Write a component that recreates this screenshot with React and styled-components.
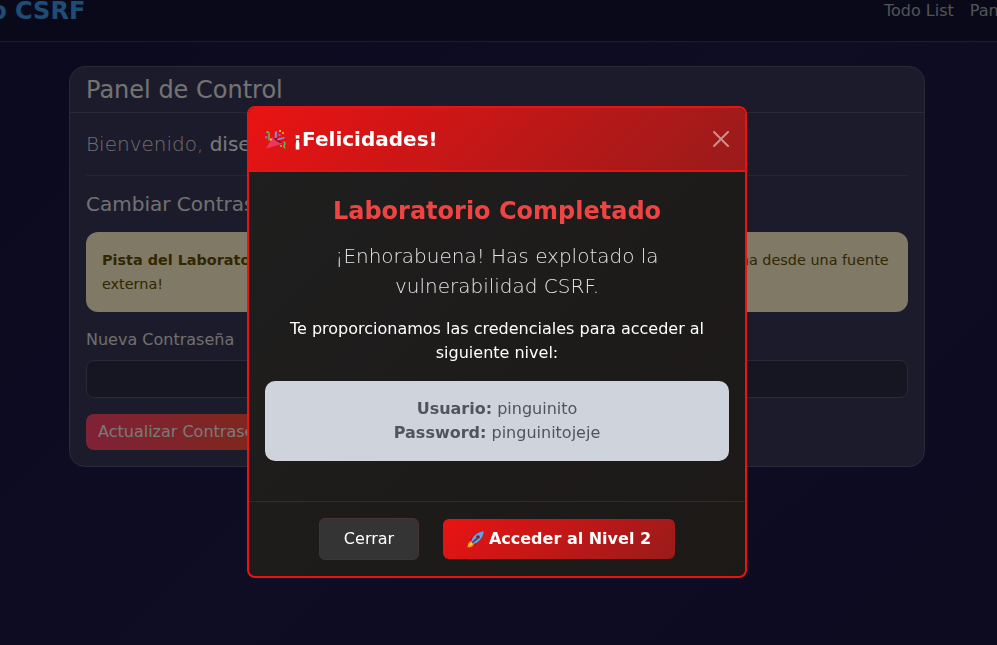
import React from 'react'
import styled, { createGlobalStyle } from 'styled-components'

const GlobalStyle = createGlobalStyle`
  html, body {
    margin: 0;
    height: 100%;
    overflow: hidden;
  }
  body {
    font-family: "DejaVu Sans", sans-serif;
    font-size: 16px;
    line-height: 1.5;
    color: #e0e0e0;
    background: linear-gradient(135deg, #16143c 0%, #1e1a48 50%, #1a1640 100%);
  }
  * {
    box-sizing: border-box;
  }
`

const Navbar = styled.nav`
  height: 42px;
  display: flex;
  justify-content: space-between;
  align-items: center;
  overflow: hidden;
  background: #141232;
  border-bottom: 1px solid #3c3a52;
`

const Brand = styled.a`
  flex: none;
  margin-left: -151px;
  margin-top: -20px;
  font-size: 24px;
  font-weight: 700;
  color: #3d9be9;
`

const NavLinks = styled.div`
  flex: none;
  display: flex;
  gap: 16px;
  margin-right: -16px;
  margin-top: -20px;
`

const NavLink = styled.a`
  color: #a6a6ad;
`

const Main = styled.main`
  padding: 24px 72px 0 69px;
`

const Card = styled.section`
  width: 856px;
  height: 401px;
  border: 1px solid #55536e;
  border-radius: 16px;
  background: #393657;
  overflow: hidden;
`

const CardHeader = styled.header`
  height: 46px;
  padding: 5px 16px 3px;
  font-size: 24px;
  line-height: 36px;
  color: #e6e6e6;
  border-bottom: 1px solid #55536e;
`

const CardBody = styled.div`
  padding: 16px;
`

const Welcome = styled.p`
  margin: 0;
  height: 47px;
  font-size: 20px;
  line-height: 30px;
  font-weight: 300;
  color: #dcdcdc;
  border-bottom: 1px solid #4a4866;

  strong {
    font-weight: 400;
    color: #f2f2f2;
  }
`

const SectionTitle = styled.h5`
  margin: 13px 0 0;
  font-size: 20px;
  font-weight: 400;
  line-height: 30px;
  color: #e0e0e0;
`

const Alert = styled.div`
  margin-top: 13px;
  height: 80px;
  padding: 16px;
  border-radius: 12px;
  font-size: 14.4px;
  line-height: 24px;
  background: #fff3cd;
  color: #664d03;
`

const FieldLabel = styled.label`
  display: block;
  margin-top: 16px;
  color: #dedede;
`

const FieldInput = styled.div`
  margin-top: 8px;
  height: 38px;
  border: 1px solid #55536e;
  border-radius: 8px;
  background: #2c2b44;
`

const SubmitButton = styled.button`
  display: block;
  margin-top: 16px;
  height: 36px;
  padding: 0 12px;
  border: 0;
  border-radius: 8px;
  font: inherit;
  color: #f2f2f2;
  background: linear-gradient(90deg, #ff4470, #ff5030);
`

const Backdrop = styled.div`
  position: fixed;
  inset: 0;
  display: flex;
  justify-content: center;
  align-items: flex-start;
  padding: 106px 3px 0 0;
  background: rgba(0, 0, 0, 0.5);
`

const Modal = styled.div`
  width: 500px;
  height: 472px;
  display: flex;
  flex-direction: column;
  border: 2px solid #ea1313;
  border-radius: 8px;
  overflow: hidden;
  background: linear-gradient(135deg, #1f1f1f, #1c1917);
`

const ModalHeader = styled.header`
  flex: none;
  height: 64px;
  display: flex;
  align-items: center;
  justify-content: space-between;
  padding: 0 16px;
  border-bottom: 2px solid #ea1313;
  background: linear-gradient(135deg, #ea1313, #991b1b);
`

const ModalTitle = styled.h5`
  margin: 0;
  display: flex;
  align-items: center;
  gap: 6px;
  font-size: 20px;
  font-weight: 700;
  line-height: 30px;
  color: #fff;
`

const CloseButton = styled.button`
  display: flex;
  padding: 0;
  border: 0;
  background: none;
  color: #fff;
  opacity: 0.5;
`

const ModalBody = styled.div`
  flex: 1;
  padding: 24px 16px 0;
  text-align: center;
`

const Heading = styled.h4`
  margin: 0 0 15px;
  font-size: 24px;
  font-weight: 700;
  line-height: 30px;
  color: #ef4444;
`

const Lead = styled.p`
  margin: 0 0 16px;
  font-size: 20px;
  font-weight: 300;
  line-height: 30px;
  color: #e5e5e5;
`

const Note = styled.p`
  margin: 0 0 16px;
  line-height: 24px;
  color: #fff;
`

const Credentials = styled.div`
  height: 80px;
  padding: 16px;
  border-radius: 10px;
  line-height: 24px;
  color: #50545d;
  background: #cfd4dc;
`

const ModalFooter = styled.footer`
  flex: none;
  height: 75px;
  display: flex;
  justify-content: center;
  align-items: center;
  gap: 24px;
  border-top: 1px solid #332b2b;
`

const CancelButton = styled.button`
  width: 100px;
  height: 42px;
  border: 1px solid #4a3232;
  border-radius: 6px;
  font: inherit;
  color: #fff;
  background: #343434;
`

const PrimaryButton = styled.button`
  width: 232px;
  height: 40px;
  display: flex;
  align-items: center;
  justify-content: center;
  gap: 5px;
  border: 0;
  border-radius: 6px;
  font: inherit;
  font-weight: 700;
  color: #fff;
  background: linear-gradient(135deg, #ea1313, #991b1b);
`

const CloseIcon = () => (
  <svg width="16" height="16" viewBox="0 0 16 16" fill="currentColor">
    <path d="M.293.293a1 1 0 0 1 1.414 0L8 6.586 14.293.293a1 1 0 1 1 1.414 1.414L9.414 8l6.293 6.293a1 1 0 0 1-1.414 1.414L8 9.414l-6.293 6.293a1 1 0 0 1-1.414-1.414L6.586 8 .293 1.707a1 1 0 0 1 0-1.414z" />
  </svg>
)

// party popper, drawn because the emoji font here differs from the reference
const PopperIcon = () => (
  <svg width="22" height="21" viewBox="0 0 22 21" fill="none" role="img" aria-label="🎉">
    <path d="M1 19.5 7.5 8.2 17.5 14.8Z" fill="#e93a5e" />
    <path d="M8.2 8.5C10.5 8 15 11 16.8 14C14 14 10 12 8.2 8.5Z" fill="#8e0f2a" />
    <path d="M4 11.5V5C4 2.5 2 2 1.8 4" stroke="#7dbb4a" strokeWidth="1.4" />
    <path d="M10.5 9 11.2 2.5" stroke="#9b7fd0" strokeWidth="2.2" />
    <path d="M12.5 11C15 9 17 10 19.5 8.5" stroke="#a787d8" strokeWidth="1.4" />
    <rect x="0" y="7" width="2.4" height="2.4" fill="#a05cc8" />
    <rect x="14" y="1" width="2" height="2" fill="#f5b82e" />
    <rect x="17" y="3" width="2" height="2" fill="#f0913a" />
    <rect x="13.5" y="5" width="2" height="2" fill="#a05cc8" />
    <rect x="5" y="9.5" width="2" height="2" fill="#f5b82e" />
    <path d="M19 12.5 20 15 18.8 17 20 19.5" stroke="#6fb24a" strokeWidth="1.6" />
    <rect x="15" y="16" width="2" height="2" fill="#6fb24a" />
  </svg>
)

// rocket, same reason as the popper
const RocketIcon = () => (
  <svg width="17" height="17" viewBox="0 0 17 17" role="img" aria-label="🚀">
    <path d="M0.5 16.5C0.5 13 1.5 11 4 10L7 13C6 15.5 4 16.5 0.5 16.5Z" fill="#f59a23" />
    <path d="M2.5 14.5C2.7 13 3.4 12 4.4 11.7L5.3 12.6C5 13.7 4 14.3 2.5 14.5Z" fill="#fde047" />
    <path d="M2.8 8.5 6.5 5.5 5.5 11Z" fill="#9c1c2e" />
    <path d="M8.5 14.2 11.5 10.5 6 11.5Z" fill="#9c1c2e" />
    <path d="M4.2 10.8C4.8 6.5 9.5 1 16.8.2C16 7.5 10.5 12.2 6.2 12.8Z" fill="#57a8ea" />
    <path d="M5.2 11.8C7 10 9 8.2 10.4 7.5" stroke="#8c1d33" strokeWidth="1.4" fill="none" />
    <circle cx="11" cy="6" r="1.8" fill="#7a1f33" />
  </svg>
)

const App = () => {
  return (
    <>
      <GlobalStyle />
      <Navbar>
        <Brand>Laboratorio CSRF</Brand>
        <NavLinks>
          <NavLink>Todo List</NavLink>
          <NavLink>Panel</NavLink>
        </NavLinks>
      </Navbar>
      <Main>
        <Card>
          <CardHeader>Panel de Control</CardHeader>
          <CardBody>
            <Welcome>Bienvenido, <strong>diseñador</strong></Welcome>
            <SectionTitle>Cambiar Contraseña</SectionTitle>
            <Alert>
              <strong>Pista del Laboratorio:</strong> Ese formulario no usa token CSRF. ¡Intenta cambiar tu contraseña desde una fuente externa!
            </Alert>
            <FieldLabel>Nueva Contraseña</FieldLabel>
            <FieldInput />
            <SubmitButton>Actualizar Contraseña</SubmitButton>
          </CardBody>
        </Card>
      </Main>
      <Backdrop>
        <Modal>
          <ModalHeader>
            <ModalTitle><PopperIcon /> ¡Felicidades!</ModalTitle>
            <CloseButton aria-label="Cerrar"><CloseIcon /></CloseButton>
          </ModalHeader>
          <ModalBody>
            <Heading>Laboratorio Completado</Heading>
            <Lead>¡Enhorabuena! Has explotado la vulnerabilidad CSRF.</Lead>
            <Note>Te proporcionamos las credenciales para acceder al siguiente nivel:</Note>
            <Credentials>
              <div><strong>Usuario:</strong> pinguinito</div>
              <div><strong>Password:</strong> pinguinitojeje</div>
            </Credentials>
          </ModalBody>
          <ModalFooter>
            <CancelButton>Cerrar</CancelButton>
            <PrimaryButton><RocketIcon /> Acceder al Nivel 2</PrimaryButton>
          </ModalFooter>
        </Modal>
      </Backdrop>
    </>
  )
}

export default App
